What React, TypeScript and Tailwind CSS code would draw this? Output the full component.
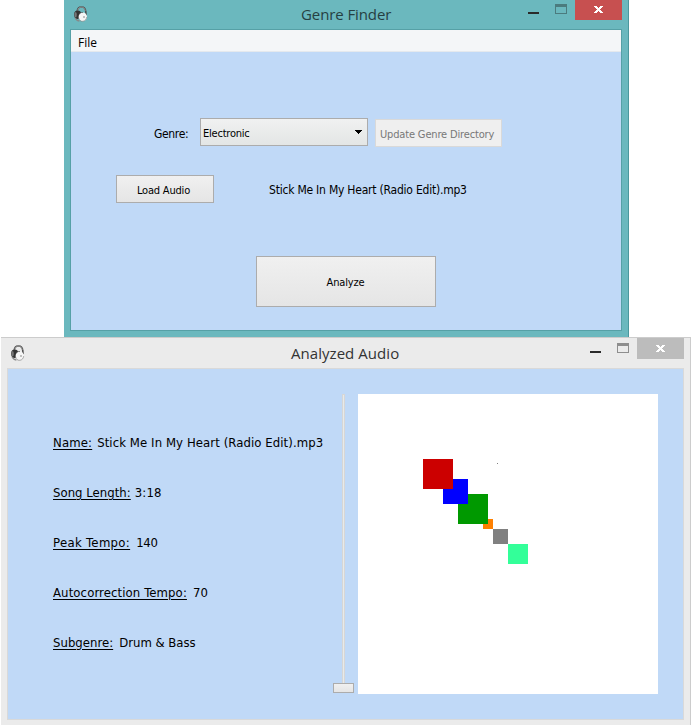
import React from "react";

function HeadphonesIcon() {
  return (
    <svg width="16" height="18" viewBox="0 0 16 18" fill="none">
      <path d="M4.2 7C4.2 3.6 5.6 1.9 8.4 1.9c2.9 0 4.3 1.9 4.4 5l.3 3.5" stroke="#4a4a4a" strokeWidth="1.5" />
      <path d="M4.6 6C5 3.4 6.2 2.1 8.4 2.1c2.3 0 3.6 1.4 3.9 4" stroke="#b8b8b8" strokeWidth=".6" />
      <ellipse cx="4.7" cy="9.8" rx="3.6" ry="4.2" fill="#333" />
      <ellipse cx="2.6" cy="9.8" rx="1.2" ry="2.8" fill="#777" />
      <path d="M2 13.2c1.2 1.8 2.6 2.6 4.4 3" stroke="#888" strokeWidth="1.2" />
      <ellipse cx="9.8" cy="11.9" rx="4.2" ry="4.4" fill="#f6f6f6" />
      <path d="M5.6 12.8c.4 2.4 2 3.8 4.2 3.5 2-.2 3.6-1.6 3.9-4.2" stroke="#888" strokeWidth=".7" />
      <path d="M6 8.8c1-1.1 2.4-1.6 4-1.2" stroke="#555" strokeWidth=".7" />
      <rect x="10.5" y="11.5" width="1" height="1" fill="#222" />
    </svg>
  );
}

function WindowControls({ active }: { active: boolean }) {
  const frame = active ? "#4b7b7e" : "#8e8e8e";
  return (
    <div className="flex items-start">
      <div className={`h-[2px] w-[11px] bg-[#2a2a2a] ${active ? "mt-[12px]" : "mt-[13px]"}`} />
      <svg className={`ml-[16px] ${active ? "mt-[4px]" : "mt-[5px]"}`} width="12" height="10" viewBox="0 0 12 10" shapeRendering="crispEdges">
        <path d="M0 0h12v10H0zM1 3v6h10V3z" fill={frame} fillRule="evenodd" />
      </svg>
      <div className={`ml-[8px] flex w-[47px] justify-center ${active ? "h-[20px] bg-[#c75050] pt-[6px]" : "h-[21px] bg-[#bcbcbc] pt-[7px]"}`}>
        <svg width="9" height="7" viewBox="0 0 9 7" shapeRendering="crispEdges">
          <path d="M0 0h3v1h1v1h1V1h1V0h3v1H8v1H7v1H6v1h1v1h1v1h1v1H6V6H5V5H4v1H3v1H0V6h1V5h1V4h1V3H2V2H1V1H0z" fill="#fff" />
        </svg>
      </div>
    </div>
  );
}

const details = [
  { label: "Name:", value: "Stick Me In My Heart (Radio Edit).mp3", gap: "ml-[5px]", lt: "tracking-[0.15px]", vt: "tracking-[0.08px]" },
  { label: "Song Length:", value: "3:18", gap: "ml-[4px]", lt: "tracking-[0.03px]", vt: "tracking-[0.15px]" },
  { label: "Peak Tempo:", value: "140", gap: "ml-[6px]", lt: "tracking-[0.33px]", vt: "tracking-[-0.2px]" },
  { label: "Autocorrection Tempo:", value: "70", gap: "ml-[6px]", lt: "tracking-[0.11px]", vt: "tracking-normal" },
  { label: "Subgenre:", value: "Drum & Bass", gap: "ml-[6px]", lt: "tracking-[0.02px]", vt: "tracking-normal" },
];

function GenreFinder() {
  return (
    <section className="ml-[64px] h-[337px] w-[565px] border-r border-[#4b989e] bg-[#6bb8be]">
      <header className="flex h-[29px] items-start">
        <div className="ml-[9px] mt-[5px]"><HeadphonesIcon /></div>
        <h1 className="ml-[212px] mt-[4px] w-[229px] font-['Open_Sans',sans-serif] text-[15px] leading-[20px] tracking-[-0.1px] text-[#263f42]">Genre Finder</h1>
        <div className="-ml-[2px]"><WindowControls active /></div>
      </header>
      <main className="ml-[6px] h-[302px] w-[552px] border border-[#56a0a6] bg-[#c0d9f7]">
        <nav className="h-[22px] border-b border-[#e5e9ed] bg-[#f4f6f8] pl-[7px] font-['Open_Sans',sans-serif] text-[12px] leading-[25px]">File</nav>
        <div className="flex items-start pt-[66px]">
          <label className="ml-[83px] mt-[8px] w-[46px] text-[12px] leading-[17px] tracking-[-0.35px]">Genre:</label>
          <div className="flex h-[28px] w-[168px] items-start justify-between border border-[#acacac] bg-linear-to-b from-[#f0f1f1] to-[#e3e6e5] pl-[2px] pr-[4px]">
            <span className="mt-[6px] leading-[17px] tracking-[-0.22px]">Electronic</span>
            <svg className="mt-[11px]" width="9" height="4" viewBox="0 0 9 4" shapeRendering="crispEdges"><path d="M1 0h7v1H7v1H6v1H5v1H4V3H3V2H2V1H1z" fill="#000" /></svg>
          </div>
          <button className="ml-[7px] mt-px h-[28px] w-[127px] border border-[#d9d9d9] bg-[#efefef] pl-[4px] pt-px text-left leading-[27px] tracking-[-0.16px] text-[#787878]">Update Genre Directory</button>
        </div>
        <div className="mt-[28px] flex items-start">
          <button className="ml-[45px] h-[28px] w-[98px] border border-[#acacac] bg-linear-to-b from-[#f0f0f0] to-[#e5e5e5] pl-[20px] pt-px text-left leading-[27px] tracking-[-0.2px]">Load Audio</button>
          <span className="ml-[55px] mt-[7px] text-[12px] leading-[17px] tracking-[-0.22px]">Stick Me In My Heart (Radio Edit).mp3</span>
        </div>
        <button className="ml-[185px] mt-[53px] block h-[51px] w-[180px] border border-[#acacac] bg-linear-to-b from-[#f0f0f0] to-[#e5e5e5] pr-px pt-px leading-[50px] tracking-[-0.15px]">Analyze</button>
      </main>
    </section>
  );
}

function AnalyzedAudio() {
  return (
    <section className="ml-px h-[388px] w-[690px] border-r border-t border-[#cccccc] bg-[#ebebeb]">
      <header className="flex h-[30px] items-start">
        <div className="ml-[9px] mt-[6px]"><HeadphonesIcon /></div>
        <h1 className="ml-[265px] mt-[5px] w-[299px] font-['Open_Sans',sans-serif] text-[15px] leading-[20px] tracking-[0.05px] text-[#333]">Analyzed Audio</h1>
        <WindowControls active={false} />
      </header>
      <main className="ml-[6px] flex h-[352px] w-[677px] items-start border border-[#d9d9d9] bg-[#c0d9f7]">
        <dl className="ml-[45px] mt-[65px] w-[280px] text-[13px]">
          {details.map((item) => (
            <div key={item.label} className="flex h-[50px] whitespace-nowrap leading-[18px]">
              <dt className={`underline underline-offset-2 ${item.lt}`}>{item.label}</dt>
              <dd className={`${item.gap} ${item.vt}`}>{item.value}</dd>
            </div>
          ))}
        </dl>
        <div className="mt-[25px] flex w-[21px] flex-col items-center">
          <div className="h-[289px] w-[3px] border border-b-0 border-[#d6d6d6] bg-[#e7eaea]" />
          <div className="h-[10px] w-[21px] border border-[#acacac] bg-linear-to-b from-[#f0f0f0] to-[#e5e5e5]" />
        </div>
        <svg className="ml-[4px] mt-[25px] bg-white" width="300" height="300" viewBox="0 0 300 300" shapeRendering="crispEdges">
          <rect x="150" y="150" width="20" height="20" fill="#33ff99" />
          <rect x="135" y="135" width="15" height="15" fill="#808080" />
          <rect x="125" y="125" width="10" height="10" fill="#ff8000" />
          <rect x="100" y="100" width="30" height="30" fill="#009900" />
          <rect x="85" y="85" width="25" height="25" fill="#0000ff" />
          <rect x="65" y="65" width="30" height="30" fill="#cc0000" />
          <rect x="139" y="69" width="1" height="1" fill="#808080" />
        </svg>
      </main>
    </section>
  );
}

export default function App() {
  return (
    <div className="h-[725px] w-[691px] overflow-hidden bg-white font-['DejaVu_Sans_Condensed','DejaVu_Sans',sans-serif] text-[11px] text-black">
      <GenreFinder />
      <AnalyzedAudio />
    </div>
  );
}
